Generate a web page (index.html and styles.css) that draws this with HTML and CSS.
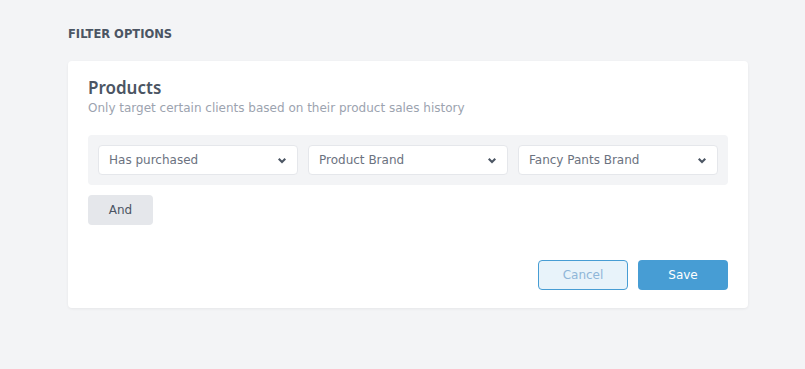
FILE: index.html
```html
<!DOCTYPE html>
<html lang="en">
<head>
  <meta charset="UTF-8">
  <meta name="viewport" content="width=device-width, initial-scale=1.0">
  <title>Filter Options</title>
  <link rel="stylesheet" href="styles.css">
</head>
<body>
  <div class="page">
    <h2 class="section-title">FILTER OPTIONS</h2>
    <div class="card">
      <h1>Products</h1>
      <p class="subtitle">Only target certain clients based on their product sales history</p>

      <div class="rule-row">
        <div class="select">
          <span>Has purchased</span>
          <svg class="chevron" width="8" height="6" viewBox="0 0 8 6"><path d="M0 1.6 L1.5 0 L4 2.4 L6.5 0 L8 1.6 L4 5.6 Z" fill="#4b5563"/></svg>
        </div>
        <div class="select">
          <span>Product Brand</span>
          <svg class="chevron" width="8" height="6" viewBox="0 0 8 6"><path d="M0 1.6 L1.5 0 L4 2.4 L6.5 0 L8 1.6 L4 5.6 Z" fill="#4b5563"/></svg>
        </div>
        <div class="select">
          <span>Fancy Pants Brand</span>
          <svg class="chevron" width="8" height="6" viewBox="0 0 8 6"><path d="M0 1.6 L1.5 0 L4 2.4 L6.5 0 L8 1.6 L4 5.6 Z" fill="#4b5563"/></svg>
        </div>
      </div>

      <button class="btn-and">And</button>

      <div class="actions">
        <button class="btn-cancel">Cancel</button>
        <button class="btn-save">Save</button>
      </div>
    </div>
  </div>
</body>
</html>
```

FILE: styles.css
```css
* {
  box-sizing: border-box;
  margin: 0;
  padding: 0;
  font-family: 'DejaVu Sans', 'Noto Sans', sans-serif;
}

body {
  background-color: #f3f4f6;
  width: 805px;
  height: 369px;
}

.page {
  padding: 27px 57px 0 68px;
}

.section-title {
  font-size: 11.5px;
  font-weight: 700;
  color: #4b5563;
  line-height: 14px;
  margin-bottom: 20px;
}

.card {
  background-color: #fff;
  border-radius: 4px;
  box-shadow: 0 1px 3px rgba(0, 0, 0, 0.06);
  width: 680px;
  padding: 16px 20px 18px;
}

h1 {
  font-family: 'Noto Sans', sans-serif;
  font-size: 17px;
  font-weight: 600;
  color: #4b5563;
  line-height: 22px;
}

.subtitle {
  font-size: 12px;
  color: #9ca3af;
  line-height: 16px;
  margin-top: 1px;
}

.rule-row {
  display: flex;
  gap: 10px;
  background-color: #f3f4f6;
  border-radius: 4px;
  padding: 10px;
  margin-top: 19px;
}

.select {
  width: 200px;
  height: 30px;
  background-color: #fff;
  border: 1px solid #e5e7eb;
  border-radius: 4px;
  display: flex;
  align-items: center;
  justify-content: space-between;
  padding: 0 11px 0 10px;
  font-size: 12px;
  color: #6b7280;
}

.chevron {
  margin-top: 1px;
}

button {
  height: 30px;
  border-radius: 4px;
  font-size: 12px;
  border: none;
  cursor: pointer;
}

.btn-and {
  margin-top: 10px;
  width: 65px;
  background-color: #e5e7eb;
  color: #4b5563;
}

.actions {
  display: flex;
  justify-content: flex-end;
  gap: 10px;
  margin-top: 35px;
}

.btn-cancel {
  width: 90px;
  background-color: #e8f3fa;
  border: 1px solid #479dd4;
  color: #8fb6d8;
}

.btn-save {
  width: 90px;
  background-color: #479dd4;
  color: #fff;
}
```
